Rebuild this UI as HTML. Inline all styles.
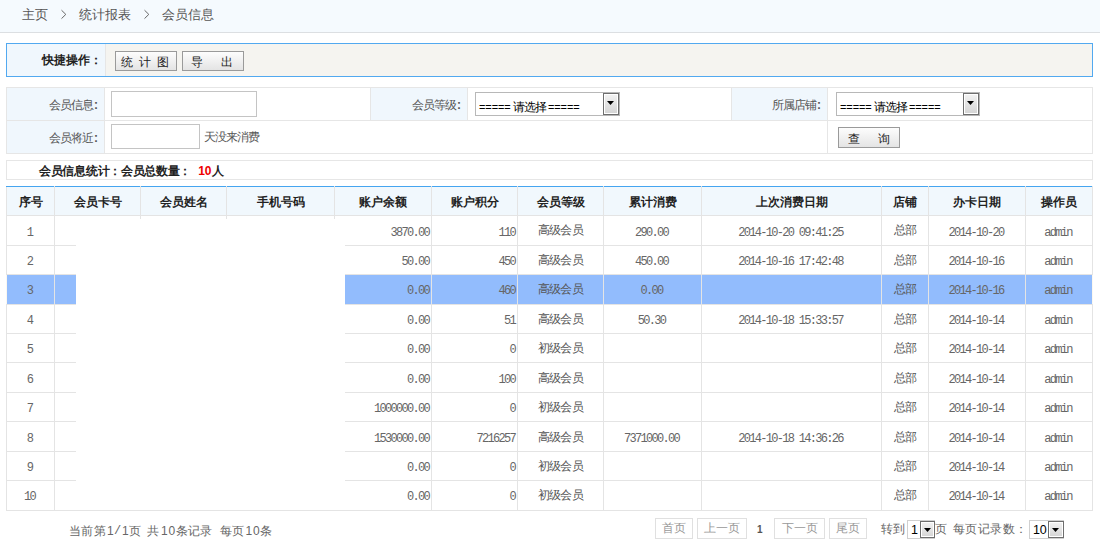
<!DOCTYPE html>
<html><head><meta charset="utf-8">
<style>
*{margin:0;padding:0;box-sizing:border-box;}
html,body{width:1100px;height:551px;overflow:hidden;background:#fff;font-family:"Liberation Sans",sans-serif;font-size:12px;color:#333;}
.abs{position:absolute;}
#crumb{left:0;top:0;width:1100px;height:33px;background:#f5fafe;border-bottom:1px solid #dcdfe2;}
#crumb span{position:absolute;top:7px;font-size:13px;color:#555;line-height:16px;}
#quick{left:6px;top:43px;width:1087px;height:34px;border:1px solid #52a9f0;background:#f5f4f0;}
#quick .lab{position:absolute;left:0;top:0;width:99px;height:32px;background:#f0f7fd;border-right:1px solid #e6e6e6;}
#quick .lab span{position:absolute;left:35px;top:9px;font-weight:bold;color:#222;font-size:12px;line-height:14px;}
.btn i{position:absolute;top:3px;font-style:normal;line-height:14px;}
.btn{position:absolute;height:20px;border:1px solid #9a9a9a;background:linear-gradient(#fdfdfd,#e4e4e4);font-size:12px;color:#222;line-height:18px;text-align:center;}
#form{left:6px;top:87px;width:1087px;height:67px;border:1px solid #e6e6e6;}
.cell{position:absolute;}
.lbl{background:#f0f7fd;}
.lbl span{position:absolute;right:6px;top:10px;font-size:12px;letter-spacing:-0.9px;color:#555;line-height:14px;}
.inp{position:absolute;border:1px solid #c4c4c4;background:#fff;}
.sel{position:absolute;border:1px solid #b8b8b8;background:#fff;}
.sel span{position:absolute;left:3px;top:6px;font-size:13px;letter-spacing:-1.5px;color:#000;line-height:15px;white-space:nowrap;}
.sel em{font-style:normal;font-size:11px;letter-spacing:-0.1px;}
.sel i{font-style:normal;font-size:12px;letter-spacing:-0.9px;margin:0 2px 0 2px;}
.dd{position:absolute;top:0px;right:0px;width:16px;height:22px;border:1px solid #6e6e6e;background:linear-gradient(#f3f3f3,#d4d4d4);box-shadow:inset 0 0 0 1px #fff;}
.dd.sm:after{top:6px;left:3px;}
.dd:after{content:"";position:absolute;left:3px;top:7px;width:7px;height:4px;background:#000;clip-path:polygon(0 0,100% 0,50% 100%);}
#stat{left:6px;top:160px;width:1087px;height:20px;border:1px solid #e6e6e6;}
#stat span{position:absolute;left:32px;top:3px;letter-spacing:-0.3px;font-weight:bold;color:#222;font-size:12px;line-height:14px;white-space:nowrap;}
#stat b{color:#e00;margin-left:1px;letter-spacing:0;}
table{border-collapse:collapse;table-layout:fixed;}
#grid{position:absolute;left:6px;top:186px;}
#grid th{height:29px;background:#f1f8fd;border:1px solid #e4e4e4;border-top:1px solid #45a5f0;font-weight:bold;font-size:12px;color:#222;text-align:center;padding:2px 0 0 0;}
#grid td{border:1px solid #e4e4e4;text-align:center;vertical-align:top;padding:7px 0 0 0;line-height:14px;font-size:12px;letter-spacing:-0.8px;color:#555;}
#grid td.n{font-family:"Liberation Mono",monospace;color:#666;font-size:12px;letter-spacing:-1.7px;padding-top:9px;padding-right:2px;}
#grid tr.c td{padding-top:8px;}
#grid tr.o td.n{padding-top:10px;}
#grid td.r{text-align:right;padding-right:2px;}
#grid tr.hl td{background:#92bcfd;}
#grid tr.hl td:first-child{border-left-color:#fbf8f0;}
#grid tr.hl td:last-child{border-right-color:#fbf8f0;}
#mask{position:absolute;left:76px;top:219px;width:269px;height:291px;background:#fff;}
#pinfo{left:69px;top:523px;font-size:12px;color:#666;white-space:nowrap;line-height:14px;}
.pb{position:absolute;top:518px;height:21px;border:1px solid #e0e0e0;color:#999;font-size:12px;line-height:19px;text-align:center;}
.ptxt{position:absolute;top:522px;font-size:12px;color:#666;line-height:14px;white-space:nowrap;}
</style></head><body>
<div id="crumb" class="abs">
 <span style="left:22px">主页</span>
 <svg style="position:absolute;left:60px;top:9px" width="8" height="12"><path d="M1.5 1.2 L5.8 5.4 L1.5 9.6" fill="none" stroke="#666" stroke-width="1"/></svg>
 <span style="left:79px">统计报表</span>
 <svg style="position:absolute;left:143px;top:9px" width="8" height="12"><path d="M1.5 1.2 L5.8 5.4 L1.5 9.6" fill="none" stroke="#666" stroke-width="1"/></svg>
 <span style="left:162px">会员信息</span>
</div>

<div id="quick" class="abs">
 <div class="lab"><span>快捷操作：</span></div>
 <div class="btn" style="left:108px;top:7px;width:62px;"><i style="left:5px">统</i><i style="left:23px">计</i><i style="left:41px">图</i></div>
 <div class="btn" style="left:175px;top:7px;width:62px;"><i style="left:8px">导</i><i style="left:38px">出</i></div>
</div>

<div id="form" class="abs">
 <div class="cell lbl" style="left:0;top:0;width:98px;height:33px;border-right:1px solid #e6e6e6;border-bottom:1px solid #e6e6e6;"><span>会员信息<b style="font-weight:bold;letter-spacing:0;margin-left:1px">:</b></span></div>
 <div class="cell" style="left:98px;top:0;width:266px;height:33px;border-right:1px solid #e6e6e6;border-bottom:1px solid #e6e6e6;"></div>
 <div class="cell lbl" style="left:364px;top:0;width:97px;height:33px;border-right:1px solid #e6e6e6;border-bottom:1px solid #e6e6e6;"><span>会员等级<b style="font-weight:bold;letter-spacing:0;margin-left:1px">:</b></span></div>
 <div class="cell" style="left:461px;top:0;width:264px;height:33px;border-right:1px solid #e6e6e6;border-bottom:1px solid #e6e6e6;"></div>
 <div class="cell lbl" style="left:725px;top:0;width:96px;height:33px;border-right:1px solid #e6e6e6;border-bottom:1px solid #e6e6e6;"><span>所属店铺<b style="font-weight:bold;letter-spacing:0;margin-left:1px">:</b></span></div>
 <div class="cell" style="left:821px;top:0;width:264px;height:33px;border-bottom:1px solid #e6e6e6;"></div>
 <div class="cell lbl" style="left:0;top:33px;width:98px;height:32px;border-right:1px solid #e6e6e6;"><span>会员将近<b style="font-weight:bold;letter-spacing:0;margin-left:1px">:</b></span></div>
 <div class="cell" style="left:820px;top:33px;width:1px;height:32px;background:#e6e6e6;"></div>
</div>
<div class="inp" style="left:111px;top:91px;width:146px;height:26px;"></div>
<div class="inp" style="left:111px;top:124px;width:89px;height:25px;"></div>
<div class="ptxt" style="left:204px;top:130px;color:#555;letter-spacing:-0.9px">天没来消费</div>
<div class="sel" style="left:475px;top:92px;width:145px;height:24px;"><span><em>=====</em><i>请选择</i><em>=====</em></span><div class="dd"></div></div>
<div class="sel" style="left:836px;top:92px;width:144px;height:24px;"><span><em>=====</em><i>请选择</i><em>=====</em></span><div class="dd"></div></div>
<div class="btn" style="left:838px;top:127px;width:62px;height:21px;"><i style="left:9px;top:4px">查</i><i style="left:39px;top:4px">询</i></div>

<div id="stat" class="abs"><span>会员信息统计：会员总数量：&nbsp; <b>10</b>人</span></div>

<table id="grid">
<colgroup>
<col style="width:48px"><col style="width:86px"><col style="width:86px"><col style="width:108px"><col style="width:97px"><col style="width:86px"><col style="width:86px"><col style="width:98px"><col style="width:180px"><col style="width:47px"><col style="width:97px"><col style="width:67px">
</colgroup>
<tr><th>序号</th><th>会员卡号</th><th>会员姓名</th><th>手机号码</th><th>账户余额</th><th>账户积分</th><th>会员等级</th><th>累计消费</th><th>上次消费日期</th><th>店铺</th><th>办卡日期</th><th>操作员</th></tr>
<tr class="o" style="height:30px"><td class="n">1</td><td></td><td></td><td></td><td class="n r">3870.00</td><td class="n r">110</td><td>高级会员</td><td class="n">290.00</td><td class="n">2014-10-20 09:41:25</td><td>总部</td><td class="n">2014-10-20</td><td class="n">admin</td></tr>
<tr style="height:29px"><td class="n">2</td><td></td><td></td><td></td><td class="n r">50.00</td><td class="n r">450</td><td>高级会员</td><td class="n">450.00</td><td class="n">2014-10-16 17:42:48</td><td>总部</td><td class="n">2014-10-16</td><td class="n">admin</td></tr>
<tr class="hl" style="height:30px"><td class="n">3</td><td></td><td></td><td></td><td class="n r">0.00</td><td class="n r">460</td><td>高级会员</td><td class="n">0.00</td><td class="n"></td><td>总部</td><td class="n">2014-10-16</td><td class="n">admin</td></tr>
<tr style="height:29px"><td class="n">4</td><td></td><td></td><td></td><td class="n r">0.00</td><td class="n r">51</td><td>高级会员</td><td class="n">50.30</td><td class="n">2014-10-18 15:33:57</td><td>总部</td><td class="n">2014-10-14</td><td class="n">admin</td></tr>
<tr style="height:29px"><td class="n">5</td><td></td><td></td><td></td><td class="n r">0.00</td><td class="n r">0</td><td>初级会员</td><td class="n"></td><td class="n"></td><td>总部</td><td class="n">2014-10-14</td><td class="n">admin</td></tr>
<tr class="o c" style="height:30px"><td class="n">6</td><td></td><td></td><td></td><td class="n r">0.00</td><td class="n r">100</td><td>高级会员</td><td class="n"></td><td class="n"></td><td>总部</td><td class="n">2014-10-14</td><td class="n">admin</td></tr>
<tr style="height:29px"><td class="n">7</td><td></td><td></td><td></td><td class="n r">1000000.00</td><td class="n r">0</td><td>初级会员</td><td class="n"></td><td class="n"></td><td>总部</td><td class="n">2014-10-14</td><td class="n">admin</td></tr>
<tr class="o c" style="height:30px"><td class="n">8</td><td></td><td></td><td></td><td class="n r">1530000.00</td><td class="n r">7216257</td><td>高级会员</td><td class="n">7371000.00</td><td class="n">2014-10-18 14:36:26</td><td>总部</td><td class="n">2014-10-14</td><td class="n">admin</td></tr>
<tr style="height:29px"><td class="n">9</td><td></td><td></td><td></td><td class="n r">0.00</td><td class="n r">0</td><td>初级会员</td><td class="n"></td><td class="n"></td><td>总部</td><td class="n">2014-10-14</td><td class="n">admin</td></tr>
<tr style="height:30px"><td class="n">10</td><td></td><td></td><td></td><td class="n r">0.00</td><td class="n r">0</td><td>初级会员</td><td class="n"></td><td class="n"></td><td>总部</td><td class="n">2014-10-14</td><td class="n">admin</td></tr>
</table>
<div id="mask"></div>

<div id="pinfo" class="abs" style="top:524px;left:0;width:300px;height:16px;"><span style="position:absolute;left:69px;letter-spacing:0.4px">当前第</span><span style="position:absolute;left:107px;letter-spacing:0px">1</span><span style="position:absolute;left:114px;letter-spacing:0px;font-family:'Liberation Mono',monospace">/</span><span style="position:absolute;left:122px;letter-spacing:0px">1</span><span style="position:absolute;left:129px;letter-spacing:0px">页</span><span style="position:absolute;left:146.5px;letter-spacing:0px">共</span><span style="position:absolute;left:161px;letter-spacing:0.8px">10</span><span style="position:absolute;left:175.5px;letter-spacing:0.4px">条记录</span><span style="position:absolute;left:219.5px;letter-spacing:0.4px">每页</span><span style="position:absolute;left:245.5px;letter-spacing:0.8px">10</span><span style="position:absolute;left:260px;letter-spacing:0px">条</span></div>
<div class="pb" style="left:655px;width:38px;">首页</div>
<div class="pb" style="left:697px;width:50px;">上一页</div>
<div class="ptxt" style="left:757px;top:523px;font-weight:bold;color:#555;font-size:10px;">1</div>
<div class="pb" style="left:774px;width:51px;">下一页</div>
<div class="pb" style="left:829px;width:38px;">尾页</div>
<div class="ptxt" style="left:881px;">转到</div>
<div class="sel" style="left:907px;top:520px;width:28px;height:19px;border-color:#d0d0d0"><span style="left:3px;top:2px;font-size:12.5px;letter-spacing:0">1</span><div class="dd sm" style="top:0px;right:-1px;width:15px;height:17px;"></div></div>
<div class="ptxt" style="left:935px;">页</div>
<div class="ptxt" style="left:953px;letter-spacing:0.4px;">每页记录数：</div>
<div class="sel" style="left:1029px;top:520px;width:35px;height:19px;border-color:#d0d0d0"><span style="left:3px;top:2px;font-size:12.5px;letter-spacing:-0.3px">10</span><div class="dd sm" style="top:0px;right:-1px;width:16px;height:17px;"></div></div>
</body></html>
